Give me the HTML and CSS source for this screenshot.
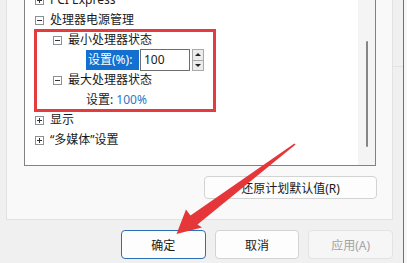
FILE: index.html
```html
<!DOCTYPE html>
<html lang="zh-CN">
<head>
<meta charset="utf-8">
<link rel="stylesheet" href="styles.css">
</head>
<body>
<div class="window">
  <div class="main">
    <div class="panel">
      <div class="tree">
        <div class="list">
          <div class="row l1"><span class="tog plus"></span><span class="label">PCI Express</span></div>
          <div class="row l1"><span class="tog"></span><span class="label">处理器电源管理</span></div>
          <div class="row l2"><span class="tog"></span><span class="label">最小处理器状态</span></div>
          <div class="row l3 edit">
            <span class="sel">设置(%):</span>
            <span class="input">100</span>
            <span class="spin"><span class="sb up"></span><span class="sb down"></span></span>
          </div>
          <div class="row l2"><span class="tog"></span><span class="label">最大处理器状态</span></div>
          <div class="row l3"><span class="label">设置: <span class="val">100%</span></span></div>
          <div class="row l1"><span class="tog plus"></span><span class="label">显示</span></div>
          <div class="row l1"><span class="tog plus"></span><span class="label">“多媒体”设置</span></div>
        </div>
        <div class="scroll"><div class="thumb"></div></div>
      </div>
      <button class="btn restore">还原计划默认值(R)</button>
    </div>
    <div class="actions">
      <button class="btn primary">确定</button>
      <button class="btn">取消</button>
      <button class="btn disabled">应用(A)</button>
    </div>
  </div>
  <div class="gutter"><div class="ghost"></div></div>
  <div class="edge"></div>
  <div class="beyond"></div>
</div>
<div class="highlight-box"></div>
<svg class="arrow" width="407" height="263" viewBox="0 0 407 263">
  <polygon fill="#e5363a" points="295.6,144.6 294.4,143.4 190.5,215.5 186,209.5 176.5,234 202,227.5 197.5,224.5"/>
</svg>
</body>
</html>
```

FILE: styles.css
```css
html, body {
  margin: 0;
  padding: 0;
}
body {
  width: 407px;
  height: 263px;
  overflow: hidden;
  background: #f0f0f0;
  font-family: "Noto Sans", "Noto Sans CJK SC", sans-serif;
  font-size: 12px;
  color: #1a1a1a;
  position: relative;
}
.window {
  display: flex;
  height: 263px;
}
.main {
  width: 393px;
  display: flex;
  flex-direction: column;
}
.panel {
  margin-left: 6px;
  height: 219px;
  background: #f9f9f9;
  border-left: 1px solid #e2e2e2;
  border-right: 1px solid #e2e2e2;
  border-bottom: 1px solid #e2e2e2;
  display: flex;
  flex-direction: column;
}
.tree {
  margin-top: -20px;
  margin-left: 17px;
  width: 350px;
  height: 184px;
  border: 1px solid #828282;
  background: #fff;
  display: flex;
}
.list {
  flex: 1;
  padding-top: 9px;
}
.row {
  height: 20px;
  display: flex;
  align-items: center;
  line-height: 20px;
  white-space: nowrap;
}
.row.l1 { padding-left: 10px; }
.row.l2 { padding-left: 28px; }
.row.l3 { padding-left: 61px; }
.tog {
  width: 9px;
  height: 9px;
  box-sizing: border-box;
  border: 1px solid #8b8f96;
  background: #fff;
  position: relative;
  margin-right: 6px;
  flex: none;
}
.tog::before {
  content: "";
  position: absolute;
  left: 1px;
  top: 3px;
  width: 5px;
  height: 1px;
  background: #333;
}
.tog.plus::after {
  content: "";
  position: absolute;
  left: 3px;
  top: 1px;
  width: 1px;
  height: 5px;
  background: #333;
}
.label { display: inline-block; }
.sel {
  background: #1470cf;
  color: #fff;
  padding: 0 1px 0 2px;
  height: 20px;
  width: 50px;
  line-height: 20px;
}
.input {
  margin-left: 1px;
  width: 50px;
  height: 22px;
  box-sizing: border-box;
  border: 1px solid #6e6e6e;
  padding-left: 3px;
  line-height: 20px;
  background: #fff;
}
.spin {
  margin-left: 2px;
  width: 12px;
  height: 22px;
  display: flex;
  flex-direction: column;
}
.sb {
  flex: 1;
  border: 1px solid #a8a8a8;
  background: #ececec;
  position: relative;
}
.sb.down { border-top: none; }
.sb::after {
  content: "";
  position: absolute;
  left: 2px;
  width: 0;
  height: 0;
  border-left: 3px solid transparent;
  border-right: 3px solid transparent;
}
.sb.up::after { top: 3px; border-bottom: 3px solid #222; }
.sb.down::after { top: 3px; border-top: 3px solid #222; }
.val { color: #2a78c2; }
.scroll {
  width: 17px;
  background: #f4f4f4;
  display: flex;
  justify-content: center;
}
.thumb {
  margin-top: 60px;
  width: 2px;
  height: 106px;
  border-radius: 1px;
  background: #868686;
}
.btn {
  font-family: "Noto Sans", "Noto Sans CJK SC", sans-serif;
  font-size: 12px;
  color: #1a1a1a;
  background: #fdfdfd;
  border: 1px solid #d3d3d3;
  border-radius: 4px;
  padding: 0;
}
.restore {
  margin-top: 10px;
  margin-left: 197px;
  width: 173px;
  height: 23px;
}
.actions {
  display: flex;
  gap: 9px;
  padding-left: 121px;
  margin-top: 10px;
}
.actions .btn {
  width: 86px;
  height: 29px;
}
.btn.primary {
  border-color: #2a6fb8;
}
.btn.disabled {
  background: #f6f6f6;
  border-color: #e3e3e3;
  color: #a3a3a3;
}
.gutter {
  width: 10px;
  position: relative;
}
.ghost {
  margin-top: 66px;
  height: 1px;
  background: #e2e2e2;
}
.edge {
  width: 1px;
  background: #2b7fd0;
}
.beyond {
  flex: 1;
  background: #f7f7f7;
}
.highlight-box {
  position: absolute;
  left: 34px;
  top: 29px;
  width: 182px;
  height: 83px;
  box-sizing: border-box;
  border: 3px solid #e43b3f;
}
.arrow {
  position: absolute;
  left: 0;
  top: 0;
}
```
